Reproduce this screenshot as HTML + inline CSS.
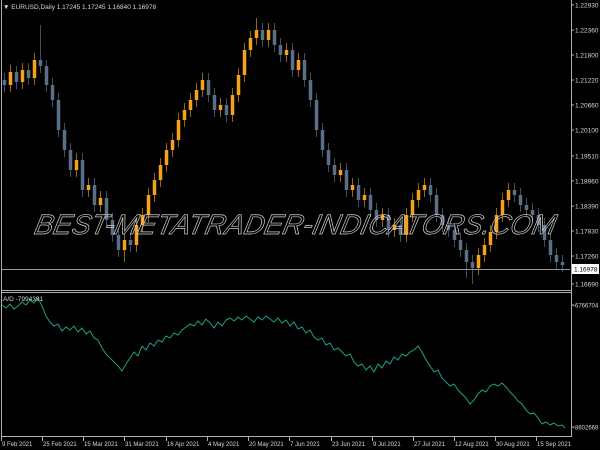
<!DOCTYPE html>
<html><head><meta charset="utf-8"><style>
html,body{margin:0;padding:0;background:#000;width:600px;height:450px;overflow:hidden}
svg{display:block}
text{font-family:"Liberation Sans",sans-serif;font-size:6.5px;fill:#d8d8d8}
.s{font-size:6px}
</style></head><body>
<svg width="600" height="450" viewBox="0 0 600 450">
<rect width="600" height="450" fill="#000"/>
<path fill="none" stroke="#3e5064" stroke-width="1" d="M4.5 73V92M16.5 66V89M28.5 63V85M40.5 25V73M46.5 60V92M52.5 78V107M58.5 93V137M64.5 123V157M70.5 143V177M82.5 153V197M94.5 178V212M106.5 191V227M112.5 213V242M118.5 228V257M130.5 233V252M208.5 73V102M214.5 88V117M226.5 98V122M262.5 23V47M274.5 23V52M280.5 38V62M292.5 43V77M304.5 53V87M310.5 73V107M316.5 93V137M322.5 123V157M328.5 143V172M334.5 158V182M346.5 163V197M358.5 178V207M370.5 188V217M376.5 203V227M388.5 208V237M400.5 218V242M430.5 178V202M436.5 188V222M442.5 208V232M448.5 218V237M454.5 223V247M460.5 233V257M466.5 243V278M472.5 255V284M514.5 183V202M520.5 188V212M526.5 198V217M532.5 203V222M538.5 208V232M544.5 218V247M550.5 233V262M556.5 248V269M562.5 255V272"/>
<path fill="none" stroke="#5a6f85" stroke-width="3.5" d="M4.5 80V85M16.5 72V82M28.5 70V78M40.5 60V66M46.5 66V85M52.5 85V100M58.5 100V130M64.5 130V150M70.5 150V170M82.5 160V190M94.5 185V205M106.5 198V220M112.5 220V235M118.5 235V250M130.5 240V245M208.5 80V95M214.5 95V110M226.5 105V115M262.5 30V40M274.5 30V45M280.5 45V55M292.5 50V70M304.5 60V80M310.5 80V100M316.5 100V130M322.5 130V150M328.5 150V165M334.5 165V175M346.5 170V190M358.5 185V200M370.5 195V210M376.5 210V220M388.5 215V230M400.5 225V235M430.5 185V195M436.5 195V215M442.5 215V225M448.5 225V230M454.5 230V240M460.5 240V250M466.5 250V262M472.5 262V268M514.5 190V195M520.5 195V205M526.5 205V210M532.5 210V215M538.5 215V225M544.5 225V240M550.5 240V255M556.5 255V262M562.5 262V265"/>
<path fill="none" stroke="#9a6512" stroke-width="1" d="M10.5 65V92M22.5 63V89M34.5 53V85M76.5 153V177M88.5 178V197M100.5 191V212M124.5 233V262M136.5 218V252M142.5 208V232M148.5 188V222M154.5 173V202M160.5 158V187M166.5 143V172M172.5 133V157M178.5 113V147M184.5 103V127M190.5 93V117M196.5 83V107M202.5 73V97M220.5 98V117M232.5 88V122M238.5 68V102M244.5 43V82M250.5 31V57M256.5 18V45M268.5 23V47M286.5 43V62M298.5 53V77M340.5 163V182M352.5 178V197M364.5 188V207M382.5 208V227M394.5 218V237M406.5 208V242M412.5 193V222M418.5 183V207M424.5 178V197M478.5 248V275M484.5 238V262M490.5 225V252M496.5 208V239M502.5 193V222M508.5 183V207"/>
<path fill="none" stroke="#f5a11a" stroke-width="3.5" d="M10.5 72V85M22.5 70V82M34.5 60V78M76.5 160V170M88.5 185V190M100.5 198V205M124.5 240V250M136.5 225V245M142.5 215V225M148.5 195V215M154.5 180V195M160.5 165V180M166.5 150V165M172.5 140V150M178.5 120V140M184.5 110V120M190.5 100V110M196.5 90V100M202.5 80V90M220.5 105V110M232.5 95V115M238.5 75V95M244.5 50V75M250.5 38V50M256.5 30V38M268.5 30V40M286.5 50V55M298.5 60V70M340.5 170V175M352.5 185V190M364.5 195V200M382.5 215V220M394.5 225V230M406.5 215V235M412.5 200V215M418.5 190V200M424.5 185V190M478.5 255V268M484.5 245V255M490.5 232V245M496.5 215V232M502.5 200V215M508.5 190V200"/>
<line x1="1" y1="269.5" x2="570" y2="269.5" stroke="#9a9a9a"/>
<text x="34" y="234" transform="skewX(-12) translate(49,0)" style="font-size:28px;font-style:italic;fill:none;stroke:#d0d0d0;stroke-width:0.7">BEST-METATRADER-INDICATORS.COM</text>
<polyline fill="none" stroke="#1f9f89" stroke-width="1" points="2,305 6,308 10,304 14,309 18,306 22,302 26,305 30,300 34,303 38,298 42,306 46,316 50,322 54,326 58,324 62,331 66,327 70,330 74,326 78,332 82,328 86,334 90,331 94,338 98,340 102,348 106,354 110,358 114,362 118,366 122,371 126,364 130,358 134,352 138,356 142,346 146,350 150,343 154,346 158,340 162,342 166,336 170,338 174,333 178,335 182,330 186,327 190,324 194,326 198,321 202,325 206,319 210,323 214,328 218,322 222,326 226,320 230,318 234,321 238,317 242,320 246,316 250,319 254,322 258,317 262,320 266,316 270,319 274,322 278,318 282,323 286,320 290,326 294,322 298,329 302,327 306,333 310,330 314,337 318,340 322,338 326,345 330,343 334,350 338,348 342,352 346,356 350,354 354,362 358,366 362,364 366,370 370,366 374,372 378,364 382,368 386,361 390,364 394,357 398,360 402,354 406,356 410,352 414,350 418,346 422,352 426,360 430,366 434,372 438,370 442,378 446,382 450,386 454,384 458,390 462,394 466,398 470,404 474,400 478,394 482,390 486,392 490,386 494,384 498,386 502,383 506,387 510,392 514,396 518,401 522,404 526,410 530,414 534,413 538,418 542,424 546,422 550,425 554,423 558,426 562,425 565,428"/>
<line x1="1.5" y1="0" x2="1.5" y2="437" stroke="#b0b0b0"/>
<line x1="571.5" y1="0" x2="571.5" y2="437" stroke="#b0b0b0"/>
<line x1="1" y1="290.5" x2="572" y2="290.5" stroke="#b0b0b0"/>
<line x1="1" y1="292.5" x2="572" y2="292.5" stroke="#b0b0b0"/>
<line x1="1" y1="436.5" x2="572" y2="436.5" stroke="#b0b0b0"/>
<text x="3" y="9">▼ EURUSD,Daily  1.17245 1.17245 1.16840 1.16978</text>
<text x="3" y="301">A/D -7994391</text>
<g stroke="#b0b0b0"><path d="M571 5H574M571 30H574M571 55H574M571 80H574M571 105H574M571 130H574M571 156H574M571 181H574M571 206H574M571 231H574M571 256H574M571 284H574M571 305H574M571 427H574M1.5 437V441M42.5 437V441M83.5 437V441M124.5 437V441M166.5 437V441M207.5 437V441M248.5 437V441M289.5 437V441M331.5 437V441M372.5 437V441M413.5 437V441M454.5 437V441M495.5 437V441M536.5 437V441"/></g>
<text x="575" y="7.5">1.22930</text><text x="575" y="32.5">1.22360</text><text x="575" y="57.5">1.21800</text><text x="575" y="82.5">1.21220</text><text x="575" y="107.5">1.20660</text><text x="575" y="132.5">1.20100</text><text x="575" y="158.5">1.19510</text><text x="575" y="183.5">1.18960</text><text x="575" y="208.5">1.18390</text><text x="575" y="233.5">1.17830</text><text x="575" y="258.5">1.17260</text><text x="575" y="286.5">1.16690</text>
<text class="s" x="573" y="307.5">-6766704</text><text class="s" x="573" y="429.5">-8602668</text>
<text class="s" x="2" y="446">9 Feb 2021</text><text class="s" x="43" y="446">25 Feb 2021</text><text class="s" x="84" y="446">15 Mar 2021</text><text class="s" x="125" y="446">31 Mar 2021</text><text class="s" x="167" y="446">16 Apr 2021</text><text class="s" x="208" y="446">4 May 2021</text><text class="s" x="249" y="446">20 May 2021</text><text class="s" x="290" y="446">7 Jun 2021</text><text class="s" x="332" y="446">23 Jun 2021</text><text class="s" x="373" y="446">9 Jul 2021</text><text class="s" x="414" y="446">27 Jul 2021</text><text class="s" x="455" y="446">12 Aug 2021</text><text class="s" x="496" y="446">30 Aug 2021</text><text class="s" x="537" y="446">15 Sep 2021</text>
<rect x="572" y="264" width="27" height="10" fill="#fff"/>
<text x="574" y="271.5" style="fill:#000">1.16978</text>
</svg>
</body></html>
